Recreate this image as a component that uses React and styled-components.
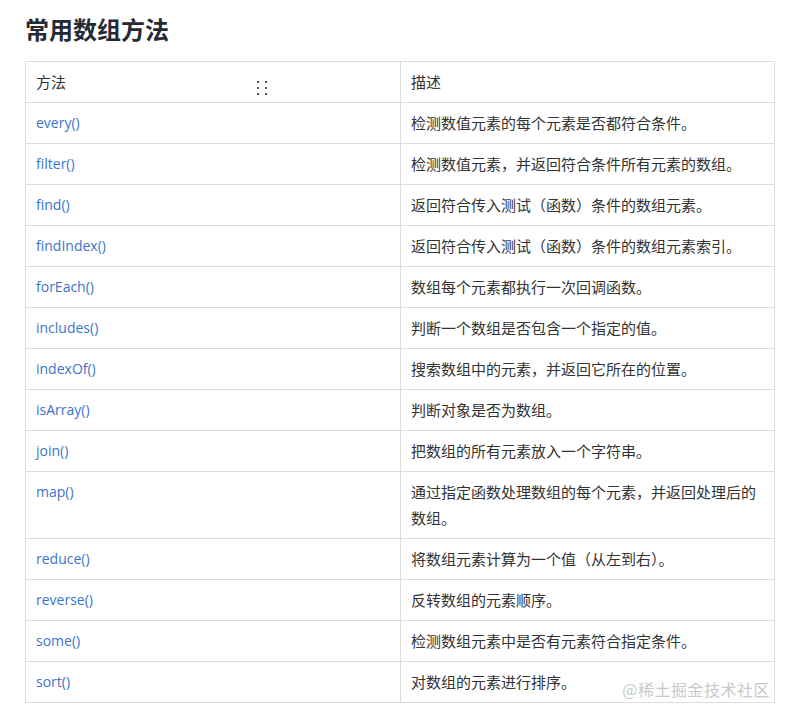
import styled, { createGlobalStyle } from "styled-components";

const GlobalStyle = createGlobalStyle`
	html, body {
		margin: 0;
		padding: 0;
		background: #fff;
	}
	body {
		font-family: "Open Sans", "Noto Sans CJK SC", sans-serif;
		color: #333;
	}
`

const Page = styled.div`
	position: relative;
	width: 791px;
	height: 720px;
	padding: 0 17px 0 25px;
	box-sizing: border-box;
	overflow: hidden;
`

const Heading = styled.h2`
	margin: 0;
	padding-top: 14px;
	height: 61px;
	box-sizing: border-box;
	font-size: 24px;
	line-height: 30px;
	font-weight: 700;
	color: #252933;
	font-family: "Noto Sans CJK SC", sans-serif;
`

const Table = styled.table`
	width: 750px;
	border-collapse: collapse;
	table-layout: fixed;
`

const Cell = styled.td`
	border: 1px solid #dcdcdc;
	padding: 7px 10px;
	line-height: 26px;
	vertical-align: top;
	font-size: 15px;
	color: #333;
	font-family: "Noto Sans CJK SC", sans-serif;
`

const NameCell = styled(Cell)`
	width: 354px;
	font-size: 14px;
	color: #3b74c9;
	font-family: "Open Sans", "Noto Sans CJK SC", sans-serif;
`

const HeadCell = styled(Cell).attrs({ as: "th" })`
	font-weight: 400;
	text-align: left;
	position: relative;
	width: ${p => p.$w || "auto"};
`

const Handle = styled.span`
	position: absolute;
	left: 231px;
	top: 19px;
	display: grid;
	grid-template-columns: 2px 2px;
	column-gap: 6px;
	row-gap: 4px;
	> i {
		width: 2px;
		height: 2px;
		background: #555;
	}
`

const Watermark = styled.div`
	position: absolute;
	right: 21px;
	top: 677px;
	font-size: 16px;
	color: #c9c9c9;
	font-family: "Noto Sans CJK SC", sans-serif;
	letter-spacing: 0.5px;
`

const rows = [
	["every()", "检测数值元素的每个元素是否都符合条件。"],
	["filter()", "检测数值元素，并返回符合条件所有元素的数组。"],
	["find()", "返回符合传入测试（函数）条件的数组元素。"],
	["findIndex()", "返回符合传入测试（函数）条件的数组元素索引。"],
	["forEach()", "数组每个元素都执行一次回调函数。"],
	["includes()", "判断一个数组是否包含一个指定的值。"],
	["indexOf()", "搜索数组中的元素，并返回它所在的位置。"],
	["isArray()", "判断对象是否为数组。"],
	["join()", "把数组的所有元素放入一个字符串。"],
	["map()", "通过指定函数处理数组的每个元素，并返回处理后的数组。"],
	["reduce()", "将数组元素计算为一个值（从左到右）。"],
	["reverse()", "反转数组的元素顺序。"],
	["some()", "检测数组元素中是否有元素符合指定条件。"],
	["sort()", "对数组的元素进行排序。"],
]

export default function App() {
	return (
		<Page>
			<GlobalStyle />
			<Heading>常用数组方法</Heading>
			<Table>
				<thead>
					<tr>
						<HeadCell $w="354px">
							方法
							<Handle><i /><i /><i /><i /><i /><i /></Handle>
						</HeadCell>
						<HeadCell>描述</HeadCell>
					</tr>
				</thead>
				<tbody>
					{rows.map(([name, desc]) => (
						<tr key={name}>
							<NameCell>{name}</NameCell>
							<Cell>{desc}</Cell>
						</tr>
					))}
				</tbody>
			</Table>
			<Watermark>@稀土掘金技术社区</Watermark>
		</Page>
	)
}
